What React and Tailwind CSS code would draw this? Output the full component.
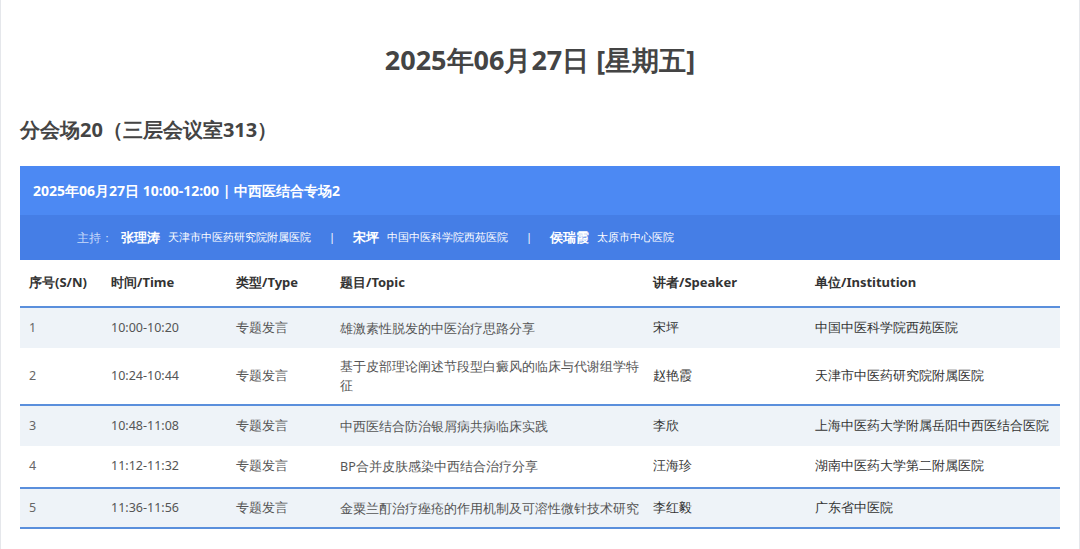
const rows = [
  ['1', '10:00-10:20', '专题发言', '雄激素性脱发的中医治疗思路分享', '宋坪', '中国中医科学院西苑医院', true],
  ['2', '10:24-10:44', '专题发言', '基于皮部理论阐述节段型白癜风的临床与代谢组学特征', '赵艳霞', '天津市中医药研究院附属医院', false],
  ['3', '10:48-11:08', '专题发言', '中西医结合防治银屑病共病临床实践', '李欣', '上海中医药大学附属岳阳中西医结合医院', true],
  ['4', '11:12-11:32', '专题发言', 'BP合并皮肤感染中西结合治疗分享', '汪海珍', '湖南中医药大学第二附属医院', false],
  ['5', '11:36-11:56', '专题发言', '金粟兰酊治疗痤疮的作用机制及可溶性微针技术研究', '李红毅', '广东省中医院', true],
]

const cols = 'grid grid-cols-[82px_125px_104px_313px_162px_1fr] items-center'

export default function App() {
  return (
    <div className="h-[549px] w-[1080px] overflow-hidden border-x border-gray-200 bg-white font-['Noto_Sans_CJK_SC',sans-serif] text-[#333]">
      <h1 className="pt-[40px] text-center text-[27px] font-bold leading-[40px] text-[#444]">2025年06月27日 [星期五]</h1>
      <h2 className="mt-[40px] px-[19px] text-[20px] font-bold leading-[20px] text-[#444]">分会场20（三层会议室313）</h2>
      <div className="mx-[19px] mt-[26px]">
        <div className="flex h-[49px] items-center bg-[#4c89f3] px-[13px] text-[14px] font-bold text-white">
          2025年06月27日 10:00-12:00 | 中西医结合专场2
        </div>
        <div className="flex h-[45px] items-center bg-[#457ee6] pl-[57px] text-[11px] text-white">
          <span className="mr-[8px] text-[12px] text-[#c9dbfb]">主持：</span>
          <b className="mr-[8px] text-[13px]">张理涛</b>
          <span>天津市中医药研究院附属医院</span>
          <span className="mx-[18px]">|</span>
          <b className="mr-[8px] text-[13px]">宋坪</b>
          <span>中国中医科学院西苑医院</span>
          <span className="mx-[18px]">|</span>
          <b className="mr-[8px] text-[13px]">侯瑞霞</b>
          <span>太原市中心医院</span>
        </div>
        <div className={`${cols} h-[46px] px-[9px] text-[13px] font-bold text-[#333]`}>
          <span>序号(S/N)</span><span>时间/Time</span><span>类型/Type</span><span>题目/Topic</span><span>讲者/Speaker</span><span>单位/Institution</span>
        </div>
        {rows.map((r, i) => (
          <div
            key={r[0]}
            className={`${cols} px-[9px] text-[12.5px] ${r[6] ? 'h-[42px] border-y-2 border-[#5a8fdc] bg-[#eef3f8]' : i === 1 ? 'h-[56px]' : 'h-[41px]'} ${i === 0 || i === 2 ? 'border-b-0' : ''}`}
          >
            <span className="text-[#666]">{r[0]}</span>
            <span className="text-[#555]">{r[1]}</span>
            <span className="text-[#555]">{r[2]}</span>
            <span className="pr-[12px] leading-[19px] text-[#555]">{r[3]}</span>
            <span className="text-[#333]">{r[4]}</span>
            <span className="whitespace-nowrap text-[#333]">{r[5]}</span>
          </div>
        ))}
      </div>
    </div>
  )
}
